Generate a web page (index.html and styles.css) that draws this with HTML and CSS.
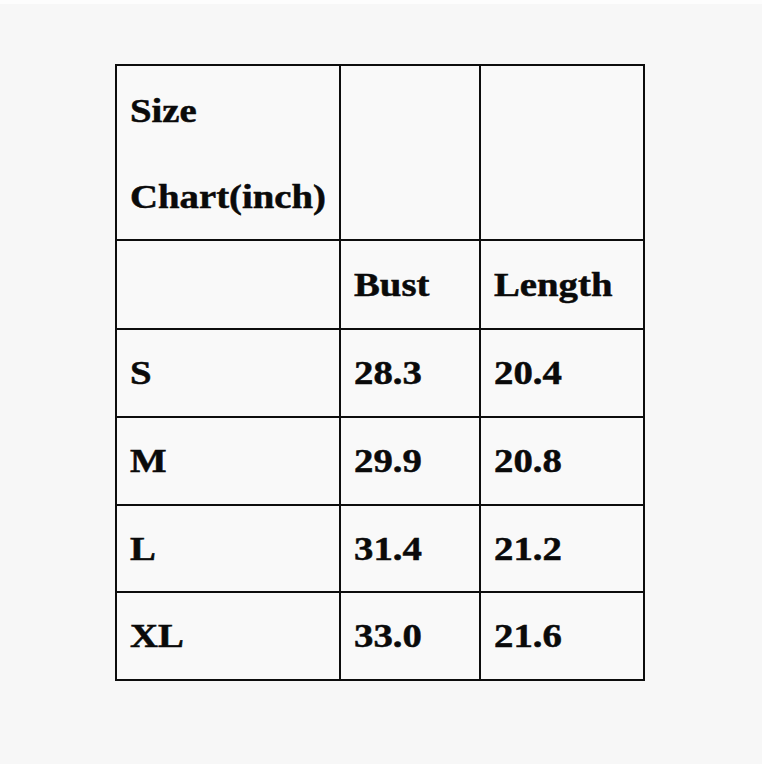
FILE: index.html
```html
<!DOCTYPE html>
<html>
<head>
<meta charset="utf-8">
<link rel="stylesheet" href="styles.css">
</head>
<body>
<div class="page">
  <div class="chart">
    <div class="cell head"><span class="t">Size</span><span class="t">Chart(inch)</span></div>
    <div class="cell"></div>
    <div class="cell"></div>

    <div class="cell"></div>
    <div class="cell"><span class="t">Bust</span></div>
    <div class="cell"><span class="t">Length</span></div>

    <div class="cell"><span class="t">S</span></div>
    <div class="cell"><span class="t">28.3</span></div>
    <div class="cell"><span class="t">20.4</span></div>

    <div class="cell"><span class="t">M</span></div>
    <div class="cell"><span class="t">29.9</span></div>
    <div class="cell"><span class="t">20.8</span></div>

    <div class="cell"><span class="t">L</span></div>
    <div class="cell"><span class="t">31.4</span></div>
    <div class="cell"><span class="t">21.2</span></div>

    <div class="cell"><span class="t">XL</span></div>
    <div class="cell"><span class="t">33.0</span></div>
    <div class="cell"><span class="t">21.6</span></div>
  </div>
</div>
</body>
</html>
```

FILE: styles.css
```css
html, body {
  margin: 0;
  padding: 0;
  background: #f7f7f7;
}
body {
  border-top: 4px solid #fdfdfd;
  width: 762px;
  height: 760px;
  overflow: hidden;
}
.page {
  padding: 60px 0 0 115px;
}
.chart {
  display: grid;
  grid-template-columns: 222px 138px 162px;
  grid-template-rows: 173px 87px 86px 86px 85px 86px;
  gap: 2px;
  padding: 2px;
  background: #0d0d0d;
  width: max-content;
}
.cell {
  background: #f9f9f9;
  display: flex;
  align-items: center;
  padding-left: 13px;
  font-family: "Liberation Serif", "Times New Roman", serif;
  font-weight: bold;
  font-size: 34px;
  color: #0a0a0a;
  -webkit-text-stroke: 0.5px #0a0a0a;
}
.cell.head {
  flex-direction: column;
  align-items: flex-start;
  justify-content: center;
  gap: 48px;
  padding-top: 2px;
}
.t {
  display: inline-block;
  transform: scaleX(1.14);
  transform-origin: left center;
  white-space: nowrap;
}
```
